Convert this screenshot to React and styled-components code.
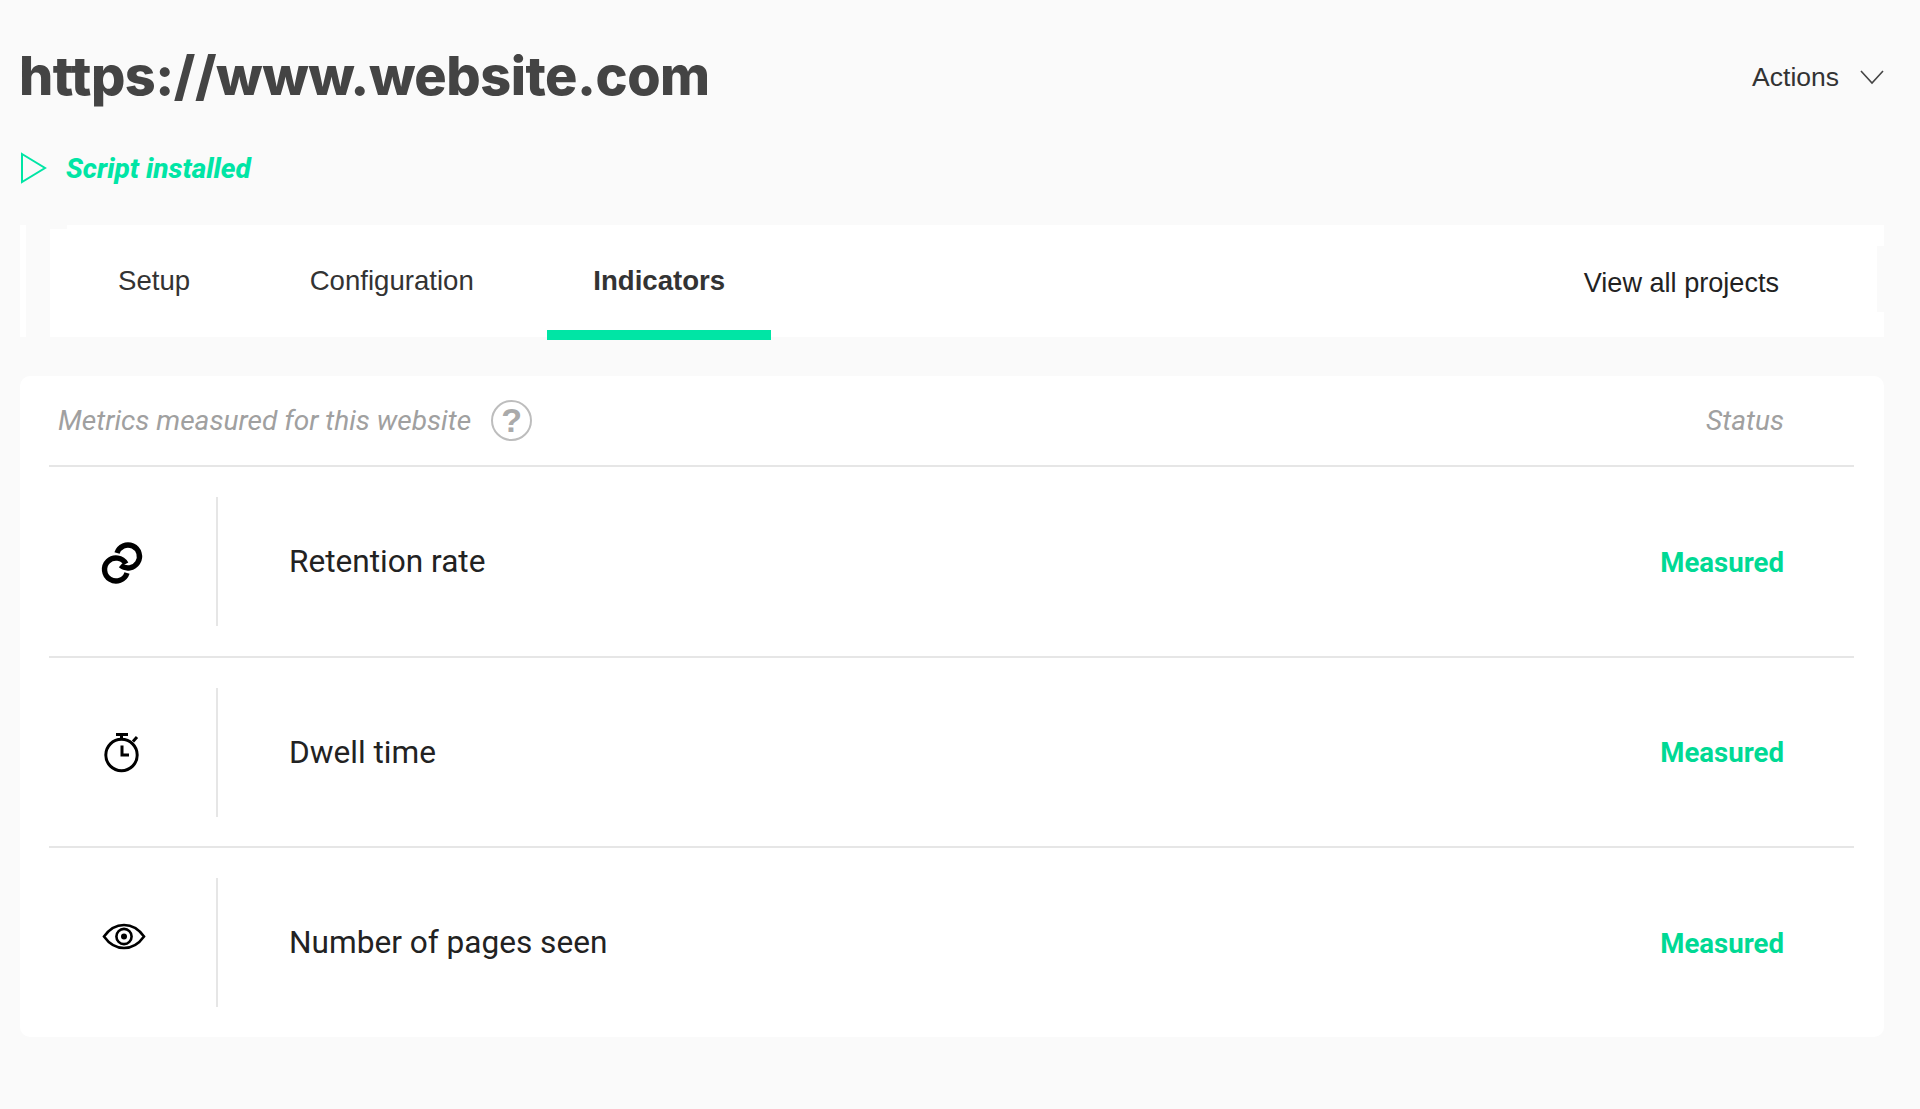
import React from "react";
import styled, { createGlobalStyle } from "styled-components";

const GlobalStyle = createGlobalStyle`
  html, body {
    margin: 0;
    background: #fafafa;
  }
`;

const Page = styled.main`
  min-height: 1109px;
  box-sizing: border-box;
  padding: 30px 36px 0 20px;
  background: #fafafa;
  font-family: "Liberation Sans", Arial, sans-serif;
`;

const Header = styled.header`
  display: flex;
  align-items: center;
  justify-content: space-between;
  height: 94px;
`;

const Title = styled.h1`
  margin: 0 0 4px -1px;
  font-family: Inter, "Liberation Sans", sans-serif;
  font-size: 54px;
  font-weight: 800;
  letter-spacing: -0.5px;
  color: #444;
`;

const ActionsMenu = styled.div`
  display: flex;
  align-items: center;
  gap: 21px;
  font-size: 26.5px;
  color: #333;
`;

const ScriptStatus = styled.div`
  display: flex;
  align-items: center;
  gap: 19px;
  height: 32px;
  margin-top: 28px;
  font-family: Roboto, sans-serif;
  font-size: 28px;
  font-weight: 800;
  font-style: italic;
  color: #00e5a5;
`;

const TabRow = styled.div`
  display: flex;
  gap: 24px;
  height: 112px;
  margin-top: 41px;
`;

const Strip = styled.div`
  flex: 0 0 6px;
  background: #fff;
`;

const TabBar = styled.nav`
  position: relative;
  flex: 1;
  display: flex;
  padding-left: 22px;
  gap: 27.5px;
  background: #fff;
  &::before {
    content: "";
    position: absolute;
    top: 0;
    left: 0;
    width: 17px;
    height: 4px;
    background: #fafafa;
  }
  &::after {
    content: "";
    position: absolute;
    top: 21px;
    right: 0;
    width: 7px;
    height: 66px;
    background: #fafafa;
  }
`;

const Tab = styled.a`
  box-sizing: border-box;
  height: 115px;
  padding: 0 46px;
  border-bottom: 10px solid ${(p) => (p.$active ? "#00e5a5" : "transparent")};
  line-height: 112px;
  font-size: 27.6px;
  font-weight: ${(p) => (p.$active ? 700 : 400)};
  color: #333;
`;

const AllProjects = styled.a`
  margin-left: auto;
  padding-right: 105px;
  line-height: 116px;
  font-size: 27.1px;
  color: #222;
`;

const Panel = styled.section`
  box-sizing: border-box;
  height: 661px;
  margin-top: 39px;
  padding: 0 30px 0 29px;
  border-radius: 10px;
  background: #fff;
`;

const PanelHead = styled.div`
  display: flex;
  align-items: center;
  height: 89px;
  padding: 0 70px 0 9px;
  border-bottom: 2px solid #e6e6e6;
  font-family: Roboto, sans-serif;
  font-size: 28.1px;
  font-style: italic;
  color: #a0a0a0;
`;

const HelpBadge = styled.span`
  display: flex;
  align-items: center;
  justify-content: center;
  box-sizing: border-box;
  width: 41px;
  height: 41px;
  margin-left: 20px;
  border: 2px solid #bdbdbd;
  border-radius: 50%;
  font-family: "Liberation Sans", sans-serif;
  font-size: 34px;
  font-weight: 700;
  font-style: normal;
  color: #aaa;
`;

const StatusLabel = styled.span`
  margin-left: auto;
`;

const Row = styled.div`
  display: flex;
  align-items: center;
  box-sizing: border-box;
  height: ${(p) => (p.$last ? "188px" : "190.5px")};
  padding: ${(p) => (p.$last ? "30px 70px 29px 0" : "30px 70px 29.5px 0")};
  border-bottom: ${(p) => (p.$last ? "none" : "2px solid #e6e6e6")};
`;

const IconCell = styled.div`
  display: flex;
  align-items: center;
  box-sizing: border-box;
  width: 169px;
  height: 129px;
  padding-left: 50px;
  border-right: 2px solid #e6e6e6;
`;

const MetricName = styled.div`
  margin-left: 71px;
  font-family: Roboto, sans-serif;
  font-size: 31.6px;
  color: #222;
`;

const Measured = styled.div`
  margin-left: auto;
  padding-top: 1px;
  font-family: Roboto, sans-serif;
  font-size: 27.6px;
  font-weight: 700;
  color: #00d994;
`;

const PlayIcon = () => (
  <svg width="27" height="32" viewBox="0 0 27 32" fill="none" stroke="#00e5a5" strokeWidth="2">
    <path d="M2 2 L25 16 L2 30 Z" />
  </svg>
);

const ChevronIcon = () => (
  <svg width="24" height="15" viewBox="0 0 24 15" fill="none" stroke="#444" strokeWidth="1.6">
    <path d="M1 1 L12 13 L23 1" />
  </svg>
);

const LinkIcon = () => (
  <svg width="48" height="48" viewBox="0 0 48 48" fill="none" stroke="#000" strokeWidth="5.4">
    <path d="M18 15 A11.5 11.5 0 1 1 21.6 27.3" />
    <path d="M28 35 A11.5 11.5 0 1 1 27 25.75" />
  </svg>
);

const TimerIcon = () => (
  <svg width="48" height="48" viewBox="0 0 48 48" fill="none" stroke="#000" strokeWidth="3">
    <circle cx="22.5" cy="27" r="15.7" />
    <path d="M17 6.5 H29 M22.5 6.5 V11 M34 13.5 L38 9" />
    <path d="M23 17.5 V27 H30" />
  </svg>
);

const EyeIcon = () => (
  <svg width="48" height="48" viewBox="0 0 48 48" fill="none" stroke="#000" strokeWidth="2.6">
    <path d="M5 17.5 C11 9 18 6 25 6 S39 9 45 17.5 C39 26 32 29 25 29 S11 26 5 17.5 Z" />
    <circle cx="25" cy="17.5" r="7.6" />
    <circle cx="25" cy="17.5" r="3" fill="#000" stroke="none" />
  </svg>
);

const metrics = [
  { name: "Retention rate", Icon: LinkIcon },
  { name: "Dwell time", Icon: TimerIcon },
  { name: "Number of pages seen", Icon: EyeIcon },
];

export default function App() {
  return (
    <Page>
      <GlobalStyle />
      <Header>
        <Title>https://www.website.com</Title>
        <ActionsMenu>
          Actions
          <ChevronIcon />
        </ActionsMenu>
      </Header>
      <ScriptStatus>
        <PlayIcon />
        Script installed
      </ScriptStatus>
      <TabRow>
        <Strip />
        <TabBar>
          <Tab>Setup</Tab>
          <Tab>Configuration</Tab>
          <Tab $active>Indicators</Tab>
          <AllProjects>View all projects</AllProjects>
        </TabBar>
      </TabRow>
      <Panel>
        <PanelHead>
          Metrics measured for this website
          <HelpBadge>?</HelpBadge>
          <StatusLabel>Status</StatusLabel>
        </PanelHead>
        {metrics.map(({ name, Icon }, i) => (
          <Row key={name} $last={i === metrics.length - 1}>
            <IconCell>
              <Icon />
            </IconCell>
            <MetricName>{name}</MetricName>
            <Measured>Measured</Measured>
          </Row>
        ))}
      </Panel>
    </Page>
  );
}
